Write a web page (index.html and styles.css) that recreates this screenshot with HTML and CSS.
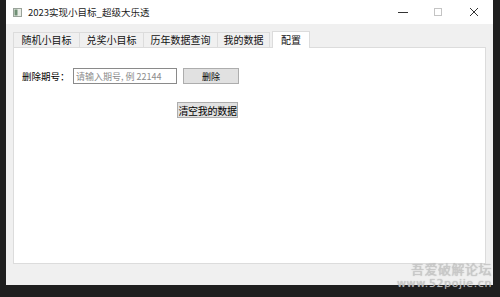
FILE: index.html
```html
<!DOCTYPE html>
<html lang="zh-CN">

<head>
    <meta charset="UTF-8">
    <meta name="viewport" content="width=device-width, initial-scale=1.0">
    <title>2023实现小目标_超级大乐透</title>
    <link rel="stylesheet" href="styles.css">
</head>

<body>
    <div class="desktop">
        <div class="window">
            <div class="titlebar">
                <svg class="app-icon" width="9" height="9" viewBox="0 0 9 9">
                    <rect x="0.5" y="0.5" width="8" height="8" fill="#e8ece6" stroke="#9aa39a"/>
                    <rect x="1.5" y="1.5" width="3" height="6" fill="#6f8f74"/>
                </svg>
                <span class="title">2023实现小目标_超级大乐透</span>
                <div class="win-buttons">
                    <span class="win-btn">
                        <svg width="10" height="10" viewBox="0 0 10 10"><path d="M0 5.5h10" stroke="#333" stroke-width="1"/></svg>
                    </span>
                    <span class="win-btn">
                        <svg width="10" height="10" viewBox="0 0 10 10"><rect x="1.5" y="1.5" width="7" height="7" fill="none" stroke="#c4c4c4"/></svg>
                    </span>
                    <span class="win-btn">
                        <svg width="10" height="10" viewBox="0 0 10 10"><path d="M1 1L9 9M9 1L1 9" stroke="#333" stroke-width="1"/></svg>
                    </span>
                </div>
            </div>

            <div class="client">
                <div class="tab-strip">
                    <div class="tab tab-1">随机小目标</div>
                    <div class="tab tab-2">兑奖小目标</div>
                    <div class="tab tab-3">历年数据查询</div>
                    <div class="tab tab-4">我的数据</div>
                    <div class="tab tab-5 active">配置</div>
                </div>
                <div class="pane">
                    <div class="row">
                        <span class="label">删除期号：</span>
                        <input class="text-input" type="text" placeholder="请输入期号, 例 22144">
                        <button class="btn btn-wide">删除</button>
                    </div>
                    <div class="row row-clear">
                        <button class="btn btn-tight">清空我的数据</button>
                    </div>
                </div>
            </div>
        </div>

        <div class="watermark">
            <div class="wm-cn">吾爱破解论坛</div>
            <div class="wm-url">www.52pojie.cn</div>
        </div>
    </div>
</body>

</html>
```

FILE: styles.css
```css
body {
    margin: 0;
    background-color: #1f1f1f;
    font-family: "Noto Sans CJK SC", "Noto Sans", sans-serif;
    font-size: 9px;
    color: #000;
}

.desktop {
    position: relative;
    width: 500px;
    height: 297px;
    overflow: hidden;
    background-color: #1f1f1f;
}

.window {
    margin-left: 6px;
    width: 487px;
    height: 285px;
    background-color: #f0f0f0;
    display: flex;
    flex-direction: column;
}

.titlebar {
    height: 24px;
    background-color: #ffffff;
    display: flex;
    align-items: center;
    padding-left: 7px;
}

.app-icon {
    display: block;
    margin-right: 6px;
}

.title {
    font-size: 9.5px;
    color: #1a1a1a;
}

.win-buttons {
    margin-left: auto;
    display: flex;
    height: 100%;
}

.win-btn {
    width: 35px;
    display: flex;
    justify-content: center;
    align-items: center;
}

.win-btn:last-child {
    width: 38px;
}

.client {
    flex: 1;
    padding: 7px 7px 0 7px;
    display: flex;
    flex-direction: column;
}

.tab-strip {
    display: flex;
    align-items: flex-end;
    height: 16px;
}

.tab {
    height: 15px;
    line-height: 14px;
    text-align: center;
    font-size: 10px;
    border: 1px solid #dcdcdc;
    border-bottom: none;
    border-right: none;
    box-sizing: border-box;
    background-color: #f0f0f0;
    color: #111;
}

.tab-1 { width: 66px; }
.tab-2 { width: 64px; }
.tab-3 { width: 74px; }
.tab-4 { width: 53px; border-right: 1px solid #dcdcdc; }

.tab.active {
    width: 38px;
    height: 17px;
    line-height: 16px;
    background-color: #ffffff;
    border-right: 1px solid #dcdcdc;
    margin-left: 2px;
    margin-bottom: -1px;
    position: relative;
}

.pane {
    height: 217px;
    background-color: #ffffff;
    border: 1px solid #dcdcdc;
    box-sizing: border-box;
    padding: 20px 0 0 8px;
}

.row {
    display: flex;
    align-items: center;
    height: 16px;
}

.label {
    width: 51px;
    font-size: 9.5px;
}

.text-input {
    width: 104px;
    height: 16px;
    box-sizing: border-box;
    border: 1px solid #8a8a8a;
    padding: 0 2px;
    font-family: "Noto Sans CJK SC", "Noto Sans", sans-serif;
    font-size: 9px;
    margin: 0;
    outline: none;
}

.text-input::placeholder {
    color: #8c8c8c;
}

.btn {
    font-family: "Noto Sans CJK SC", "Noto Sans", sans-serif;
    font-size: 9px;
    background-color: #e1e1e1;
    border: 1px solid #adadad;
    color: #000;
    margin: 0;
    box-sizing: border-box;
}

.btn-wide {
    width: 56px;
    height: 16px;
    margin-left: 6px;
    padding: 0;
}

.row-clear {
    margin-top: 18px;
    padding-left: 155px;
}

.btn-tight {
    height: 16px;
    width: 61px;
    padding: 0;
    font-size: 10px;
    letter-spacing: -0.3px;
}

.watermark {
    position: absolute;
    right: 8px;
    bottom: 6px;
    text-align: right;
    color: rgba(205, 205, 205, 0.85);
    text-shadow: 0 0 1px rgba(120, 120, 120, 0.6);
}

.wm-cn {
    font-size: 13px;
    line-height: 16px;
    letter-spacing: 0.5px;
}

.wm-url {
    font-family: "DejaVu Sans", sans-serif;
    font-size: 11px;
    line-height: 14px;
    letter-spacing: 0.6px;
}
```
